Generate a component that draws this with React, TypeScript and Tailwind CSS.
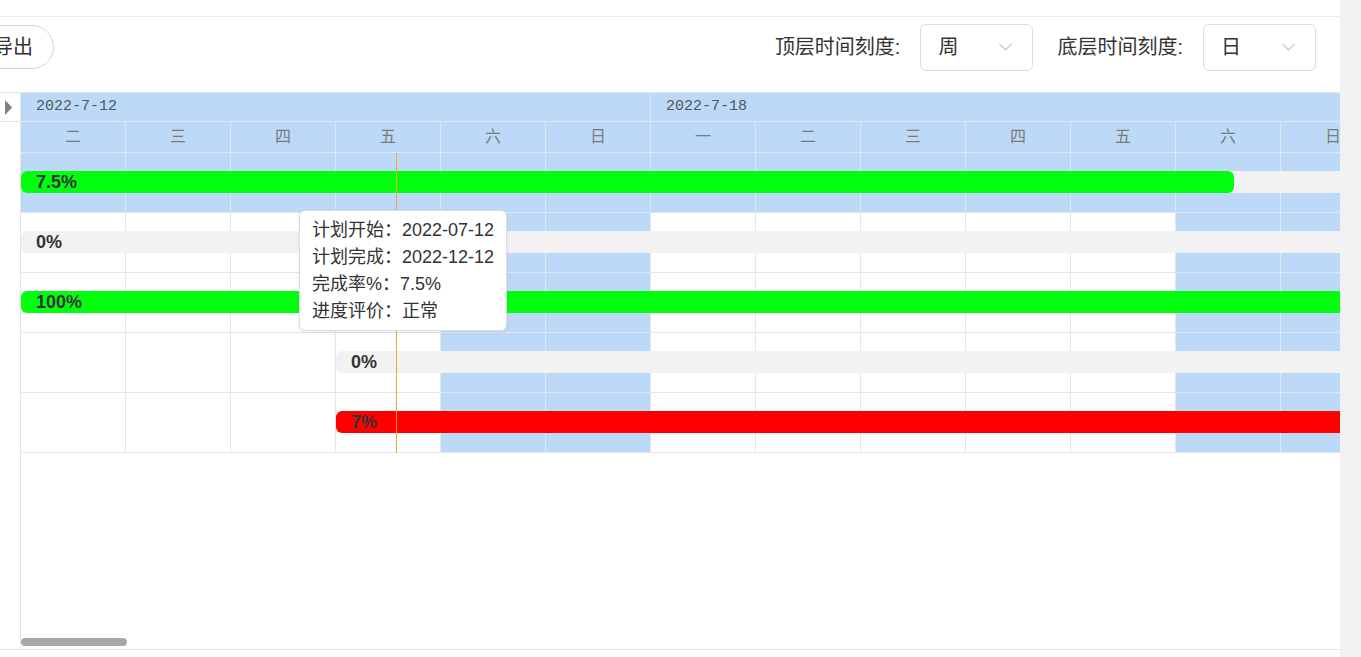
import React from 'react';

const COL = 105;
const DAYS = ['二', '三', '四', '五', '六', '日', '一', '二', '三', '四', '五', '六', '日'];
const WEEKS = [
  { label: '2022-7-12', span: 6 },
  { label: '2022-7-18', span: 7 },
];

type Task = {
  progress: string;
  start: number;
  fillClass?: string;
  fill?: number;
  selected?: boolean;
};

const TASKS: Task[] = [
  { progress: '7.5%', start: 0, fillClass: 'bg-[#00ff0f]', fill: 1213, selected: true },
  { progress: '0%', start: 0 },
  { progress: '100%', start: 0, fillClass: 'bg-[#00ff0f]', fill: 2000 },
  { progress: '0%', start: 3 },
  { progress: '7%', start: 3, fillClass: 'bg-[#ff0000]', fill: 2000 },
];

const TIP = [
  ['计划开始：', '2022-07-12'],
  ['计划完成：', '2022-12-12'],
  ['完成率%：', '7.5%'],
  ['进度评价：', '正常'],
];

const isWeekend = (d: string) => d === '六' || d === '日';

const sans = "font-['Liberation_Sans','Noto_Sans_CJK_SC',sans-serif]";

function Chevron() {
  return (
    <svg width="13" height="8" viewBox="0 0 13 8" fill="none">
      <polyline points="0.5,0.8 6.5,7 12.5,0.8" stroke="#c8bfc6" strokeWidth="1.1" />
    </svg>
  );
}

function ScaleSelect({ label, value }: { label: string; value: string }) {
  return (
    <div className="flex items-center">
      <span className="pr-[8px] text-[20px] text-[#333]">{label}</span>
      <div className="ml-[12px] flex h-[47px] w-[113px] items-center justify-between rounded-[6px] border border-[#dcdcdf] pl-[17px] pr-[20px]">
        <span className="text-[20px] text-[#333]">{value}</span>
        <Chevron />
      </div>
    </div>
  );
}

function TaskRow({ task }: { task: Task }) {
  return (
    <div className="relative flex h-[60px] border-b border-[#e2e6ee]">
      {DAYS.map((d, i) => (
        <div
          key={i}
          className={`h-full w-[105px] shrink-0 border-r border-[#e2e6ee] ${
            task.selected || isWeekend(d) ? 'bg-[#bcdaf7]' : 'bg-white'
          }`}
        />
      ))}
      <div
        className="absolute right-[-100px] top-[18px] h-[22px] rounded-l-[6px] bg-[#f2f2f2]"
        style={{ left: task.start * COL }}
      >
        {task.fill && (
          <div
            className={`absolute left-0 top-0 h-full rounded-[6px] ${task.fillClass}`}
            style={{ width: task.fill }}
          />
        )}
        <span className="absolute left-[15px] top-0 text-[18px] font-bold leading-[22px] text-[#333]">
          {task.progress}
        </span>
      </div>
    </div>
  );
}

export default function App() {
  return (
    <div className={`flex h-[657px] w-[1361px] overflow-hidden bg-white ${sans}`}>
      <div className="flex h-full w-[1340px] flex-col">
        <div className="h-[17px] shrink-0 border-b border-[#ececf0]" />

        {/* toolbar */}
        <div className="h-[75px] shrink-0 pt-[6px]">
          <div className="flex h-[48px] items-center justify-between pr-[24px]">
            <button className="ml-[-28px] flex h-[44px] w-[82px] items-center justify-center rounded-full border border-[#d6d6da] text-[20px] text-[#333]">
              导出
            </button>
            <div className="flex items-center gap-[24px]">
              <ScaleSelect label="顶层时间刻度:" value="周" />
              <ScaleSelect label="底层时间刻度:" value="日" />
            </div>
          </div>
        </div>

        {/* gantt */}
        <div className="flex h-[558px] shrink-0 border-y border-[#e2e4ea]">
          <div className="w-[21px] shrink-0 border-r border-[#e2e4ea]">
            <div className="flex h-[29px] items-center border-b border-[#e2e4ea] pl-[5px]">
              <svg width="8" height="15" viewBox="0 0 8 15">
                <polygon points="0,0 7,7.5 0,15" fill="#808080" />
              </svg>
            </div>
          </div>

          <div className="relative flex min-w-0 flex-1 flex-col overflow-hidden">
            {/* week header */}
            <div className="flex h-[29px] shrink-0 border-b border-[#e2e6ee]">
              {WEEKS.map((w) => (
                <div
                  key={w.label}
                  className="h-full shrink-0 border-r border-[#e2e6ee] bg-[#bcdaf7] pl-[15px] font-['Liberation_Mono',monospace] text-[15px] leading-[28px] text-[#555]"
                  style={{ width: w.span * COL }}
                >
                  {w.label}
                </div>
              ))}
            </div>
            {/* day header */}
            <div className="flex h-[31px] shrink-0 border-b border-[#e2e6ee]">
              {DAYS.map((d, i) => (
                <div
                  key={i}
                  className="flex h-full w-[105px] shrink-0 items-center justify-center border-r border-[#e2e6ee] bg-[#bcdaf7] text-[16px] text-[#7a7a7a]"
                >
                  {d}
                </div>
              ))}
            </div>

            {/* task rows */}
            <div className="relative shrink-0">
              {TASKS.map((t, i) => (
                <TaskRow key={i} task={t} />
              ))}
              <div className="absolute bottom-0 left-[375px] top-0 w-px bg-[#f5a43c]" />
              <div className="absolute left-[278px] top-[57px] rounded-[6px] border border-[#dcdcdf] bg-white px-[12px] pb-[5px] pt-[6px] shadow-[0_1px_4px_rgba(0,0,0,0.08)]">
                {TIP.map(([k, v]) => (
                  <div key={k} className="whitespace-nowrap text-[18px] leading-[27px] text-[#333]">
                    {k}
                    {v}
                  </div>
                ))}
              </div>
            </div>

            <div className="flex-1" />
            <div className="absolute bottom-[3px] left-0 h-[8px] w-[106px] rounded-full bg-[#a8a8a8]" />
          </div>
        </div>
      </div>
      <div className="h-full w-[21px] shrink-0 bg-[#f1f1f1]" />
    </div>
  );
}
